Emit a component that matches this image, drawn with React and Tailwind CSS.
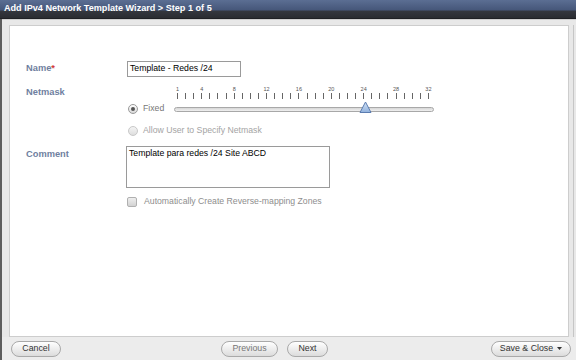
const ticks = Array.from({ length: 32 }, (_, i) => i + 1);
const labelled = [1, 4, 8, 12, 16, 20, 24, 28, 32];

function Radio({ checked, disabled }) {
  return (
    <span
      className={`flex items-center justify-center w-[10px] h-[10px] rounded-full border ${
        disabled
          ? 'border-[#c8c8c8] bg-[linear-gradient(to_bottom,#f4f4f4,#dedede)]'
          : 'border-[#9a9a9a] bg-[linear-gradient(to_bottom,#ffffff,#d8d8d8)]'
      }`}
    >
      {checked && <span className="w-[4px] h-[4px] rounded-full bg-[#555]" />}
    </span>
  );
}

function Pill({ children, className = '' }) {
  return (
    <button
      className={`h-[16px] rounded-full border border-[#a9a9a9] bg-[linear-gradient(to_bottom,#ffffff,#dcdcdc)] text-[8.8px] text-[#333] leading-none flex items-center justify-center ${className}`}
    >
      {children}
    </button>
  );
}

export default function App() {
  return (
    <div className="w-[576px] h-[360px] flex flex-col overflow-hidden bg-[#e8e8e8] font-['Liberation_Sans',Arial,sans-serif]">
      <div className="h-[19px] shrink-0 flex items-center pl-[4px] bg-[linear-gradient(to_bottom,#5b6e93_0%,#46577a_55%,#34373e_62%,#2a2c31_100%)] border-b border-[#1f2024]">
        <span className="text-white font-bold text-[9.1px] leading-none">
          Add IPv4 Network Template Wizard &gt; Step 1 of 5
        </span>
      </div>

      <div className="flex-1 flex flex-col border-l-2 border-l-[#5d5d5d] min-h-0">
        <div className="flex-1 flex pt-[5px] pl-[7px] min-h-0 border-t border-[#cfcfcf]">
          <div className="flex-1 bg-white border border-[#cdcdcd] pl-[16px] pt-[35px]">
            {/* Name */}
            <div className="flex items-center h-[16px]">
              <div className="w-[100px] text-[9.3px] font-bold text-[#6f7fa0]">
                Name<span className="text-[#d23a3a]">*</span>
              </div>
              <div className="ml-px w-[114px] h-[16px] border border-[#9a9a9a] flex items-center px-[2px] text-[8.7px] text-black">
                Template - Redes /24
              </div>
            </div>

            {/* Netmask */}
            <div className="flex mt-[9px]">
              <div className="w-[100px] text-[9.3px] font-bold text-[#6f7fa0] pt-[0px]">Netmask</div>
              <div className="flex flex-col">
                <div className="ml-[51px] w-[252px] flex justify-between">
                  {ticks.map((t) => (
                    <div key={t} className="w-px flex flex-col items-center">
                      <span className="h-[6px] text-[5.5px] leading-[6px] text-[#555] whitespace-nowrap">
                        {labelled.includes(t) ? t : ''}
                      </span>
                      <span className="mt-px w-px h-[6px] bg-[#666]" />
                    </div>
                  ))}
                </div>
                <div className="flex items-center h-[12px] mt-[4px]">
                  <div className="ml-[2px]">
                    <Radio checked />
                  </div>
                  <span className="ml-[5px] text-[8.7px] text-[#777]">Fixed</span>
                  <div className="relative ml-[10px] w-[260px] h-[5px] rounded-full border border-[#a8a8a8] bg-[linear-gradient(to_bottom,#d6d6d6,#f0f0f0)]">
                    <svg
                      className="absolute left-[184px] top-[-7px]"
                      width="13"
                      height="13"
                      viewBox="0 0 13 13"
                    >
                      <defs>
                        <linearGradient id="th" x1="0" y1="0" x2="0" y2="1">
                          <stop offset="0" stopColor="#d6e5f7" />
                          <stop offset="1" stopColor="#8fb0dc" />
                        </linearGradient>
                      </defs>
                      <path d="M6.5 1 L12 11.5 L1 11.5 Z" fill="url(#th)" stroke="#5b7cb0" strokeWidth="1" strokeLinejoin="round" />
                    </svg>
                  </div>
                </div>
              </div>
            </div>

            {/* Allow user */}
            <div className="flex items-center h-[12px] mt-[10px] pl-[102px]">
              <Radio disabled />
              <span className="ml-[5px] text-[8.7px] text-[#a4a4a4]">Allow User to Specify Netmask</span>
            </div>

            {/* Comment */}
            <div className="flex mt-[9px]">
              <div className="w-[100px] text-[9.3px] font-bold text-[#6f7fa0] pt-[2px]">Comment</div>
              <div className="w-[204px] h-[42px] border border-[#9a9a9a] px-[2px] pt-[1px] text-[8.7px] text-black leading-[11px]">
                Template para redes /24 Site ABCD
              </div>
            </div>

            {/* Checkbox */}
            <div className="flex items-center h-[12px] mt-[8px] pl-[101px]">
              <span className="w-[10px] h-[10px] rounded-[2px] border border-[#b0b0b0] bg-[linear-gradient(to_bottom,#eeeeee,#d2d2d2)]" />
              <span className="ml-[7px] text-[8.7px] text-[#8e8e8e]">Automatically Create Reverse-mapping Zones</span>
            </div>
          </div>
          <div className="w-[4px]" />
          <div className="w-px bg-[#c6c6c6]" />
          <div className="w-[2px]" />
        </div>

        <div className="h-[23px] shrink-0 flex items-center bg-[#ececec] pl-[9px]">
          <Pill className="w-[50px]">Cancel</Pill>
          <Pill className="w-[57px] ml-[160px] text-[#777]">Previous</Pill>
          <Pill className="w-[41px] ml-[9px]">Next</Pill>
          <Pill className="w-[80px] ml-auto mr-[5px] gap-[4px]">
            <span>Save &amp; Close</span>
            <svg width="5" height="3" viewBox="0 0 5 3">
              <path d="M0 0 H5 L2.5 3 Z" fill="#333" />
            </svg>
          </Pill>
        </div>
      </div>
    </div>
  );
}
